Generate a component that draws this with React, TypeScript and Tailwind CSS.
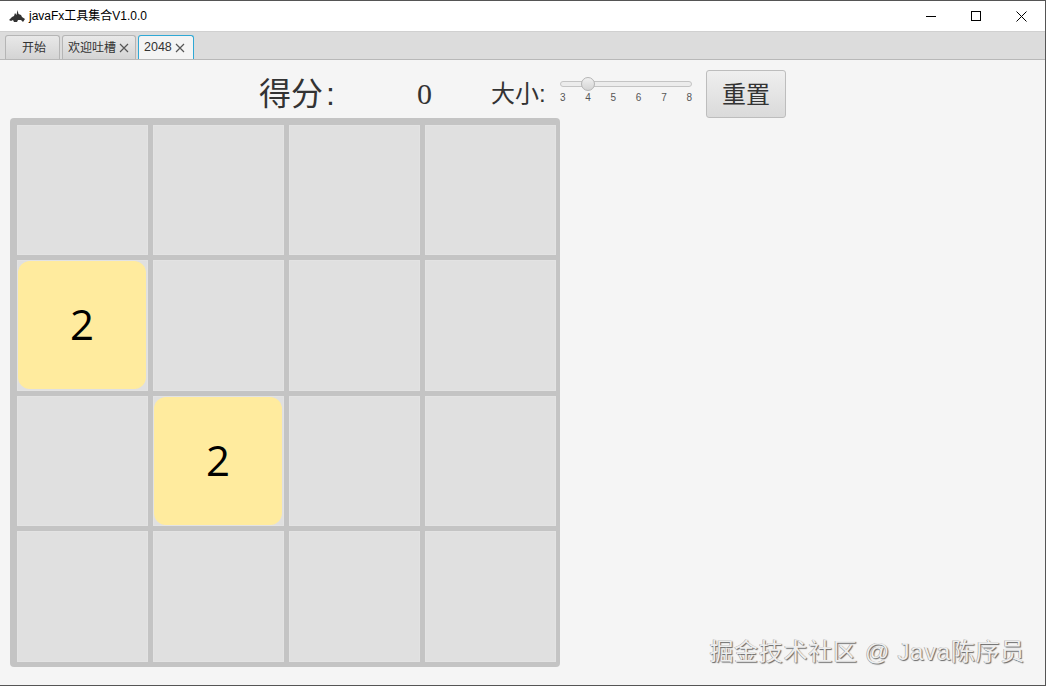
const FONT = "font-['Liberation_Sans','Noto_Sans_CJK_SC',sans-serif]";

function Cell({ v }: { v?: number }) {
  return (
    <div className="w-[131px] h-[130.5px] bg-[#e0e0e0] border border-[#e3e3e3] flex items-center justify-center">
      {v ? (
        <div className="shrink-0 w-[128px] h-[128px] rounded-[12px] bg-[#ffeb9e] flex items-center justify-center pb-[2px] text-[42px] text-black font-['Open_Sans',sans-serif] leading-none">
          {v}
        </div>
      ) : null}
    </div>
  );
}

const board: (number | undefined)[] = [
  undefined, undefined, undefined, undefined,
  2, undefined, undefined, undefined,
  undefined, 2, undefined, undefined,
  undefined, undefined, undefined, undefined,
];

function Tab({ label, close, active, w, pl }: { label: string; close?: boolean; active?: boolean; w: string; pl: string }) {
  return (
    <div
      className={`${w} ${pl} h-[24px] rounded-t-[3px] border border-b-0 flex items-center gap-[2px] text-[#333] ${
        active ? "border-[#2fa8d5] bg-[#f4f4f4] text-[12.5px]" : "border-[#b5b5b5] bg-[linear-gradient(#e8e8e8,#d4d4d4)] text-[12px]"
      }`}
    >
      <span>{label}</span>
      {close ? (
        <svg width="10" height="10" viewBox="0 0 10 10" className="ml-[1px]">
          <path d="M1 1L9 9M9 1L1 9" stroke="#555" strokeWidth="1.2" />
        </svg>
      ) : null}
    </div>
  );
}

export default function App() {
  return (
    <div className={`relative w-[1046px] h-[686px] flex flex-col overflow-hidden bg-[#f5f5f5] border-t border-r border-b border-[#555] ${FONT}`}>
      {/* title bar */}
      <div className="h-[30px] shrink-0 bg-white flex items-center pl-[9px]">
        <svg width="16" height="14" viewBox="0 0 16 14" className="mr-[4px]">
          <path d="M0 11L3 8L5 7L6 4L7.5 6L8.5 1L9.5 5L12 6L13 8L16 10L14 13L12 11L9 11L8 13L5 13L4 11L2 12Z" fill="#333" />
        </svg>
        <span className="text-[12px] text-black">javaFx工具集合V1.0.0</span>
        <div className="ml-auto flex items-center h-full">
          <div className="w-[45px] h-full flex items-center justify-center">
            <div className="w-[10px] h-px bg-black" />
          </div>
          <div className="w-[45px] h-full flex items-center justify-center">
            <div className="w-[10px] h-[10px] border border-black" />
          </div>
          <div className="w-[46px] h-full flex items-center justify-center mr-[1px]">
            <svg width="11" height="11" viewBox="0 0 11 11">
              <path d="M0.5 0.5L10.5 10.5M10.5 0.5L0.5 10.5" stroke="#000" strokeWidth="1" />
            </svg>
          </div>
        </div>
      </div>
      {/* tab bar */}
      <div className="h-[29px] shrink-0 bg-[#dcdcdc] border-t border-t-[#d0d0d0] border-b border-b-[#b8b8b8] flex items-end pl-[5px] gap-[2px]">
        <Tab label="开始" w="w-[55px]" pl="pl-[16px]" />
        <Tab label="欢迎吐槽" close w="w-[74px]" pl="pl-[5px]" />
        <Tab label="2048" close active w="w-[56px]" pl="pl-[5px]" />
      </div>
      {/* controls */}
      <div className="h-[48px] mt-[10px] shrink-0 flex items-center text-[#333]">
        <span className="ml-[259px] w-[158px] text-[32px] leading-none whitespace-nowrap">
          得分<span className="ml-[3px]">:</span>
        </span>
        <span className="w-[74px] text-[30px] leading-none font-['Liberation_Serif',serif]">0</span>
        <span className="w-[69px] text-[24px] leading-none whitespace-nowrap">大小:</span>
        <div className="w-[132px] flex flex-col mt-[-4px]">
          <div className="relative h-[6px] rounded-full border border-[#c4c4c4] bg-[#ececec]">
            <div className="absolute left-[20px] top-[-5px] w-[14px] h-[14px] rounded-full border border-[#b4b4b4] bg-[linear-gradient(#f0f0f0,#d4d4d4)]" />
          </div>
          <div className="flex justify-between mt-[5px] text-[10px] leading-[12px] text-[#555]">
            <span>3</span><span>4</span><span>5</span><span>6</span><span>7</span><span>8</span>
          </div>
        </div>
        <button className="ml-[14px] w-[80px] h-[48px] pt-[1px] rounded-[3px] border border-[#bdbdbd] bg-[linear-gradient(#efefef,#dadada)] text-[24px] text-[#333] flex items-center justify-center">
          重置
        </button>
      </div>
      {/* board */}
      <div className="ml-[10px] w-[550px] h-[549px] rounded-[4px] bg-[#c4c4c4] pt-[6.5px] pl-[6.5px] grid grid-cols-[repeat(4,131px)] grid-rows-[repeat(4,130.5px)] gap-[5px]">
        {board.map((v, i) => (
          <Cell key={i} v={v} />
        ))}
      </div>
      {/* watermark */}
      <div className="absolute right-[20px] bottom-[21px] text-[24px] leading-none text-[#eeeeee] tracking-[0.7px] whitespace-nowrap [text-shadow:1px_1px_1px_#666,-0.5px_-0.5px_0.5px_#999]">
        掘金技术社区 @ Java陈序员
      </div>
    </div>
  );
}
